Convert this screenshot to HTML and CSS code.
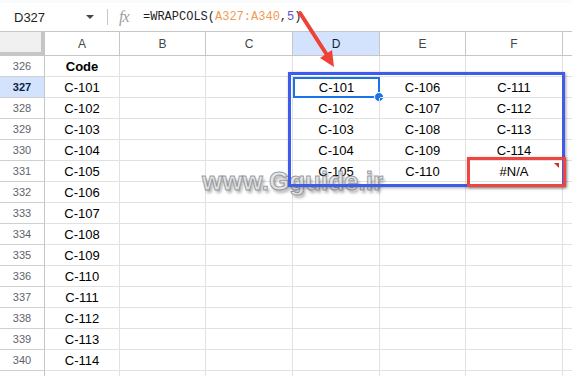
FILE: index.html
```html
<!DOCTYPE html>
<html lang="en">
<head>
    <meta charset="UTF-8">
    <title>WRAPCOLS - Sheets</title>
    <link rel="stylesheet" href="styles.css">
</head>
<body>
<div class="page">
    <div class="formula-bar">
        <div class="name-box">D327</div>
        <div class="name-arrow"></div>
        <div class="bar-sep"></div>
        <div class="fx">fx</div>
        <div class="formula">=WRAPCOLS(<span class="ref">A327:A340</span>,<span class="num">5</span>)</div>
    </div>

    <div class="sheet" id="sheet"></div>

    <!-- annotations over the grid -->
    <div class="watermark">www.Gguide.ir</div>
    <div class="mark-blue"></div>
    <div class="mark-red"></div>
    <svg class="arrow" width="572" height="376" viewBox="0 0 572 376">
        <line x1="300" y1="13" x2="327" y2="55" stroke="#ef4136" stroke-width="4" stroke-linecap="round"/>
        <polygon points="334,67 320,58 332,50" fill="#ef4136"/>
    </svg>
</div>

<script>
    var cols = ['A', 'B', 'C', 'D', 'E', 'F', 'G'];
    var sheet = document.getElementById('sheet');

    // wrapped output, 5 rows per column
    var codes = [];
    for (var i = 101; i <= 114; i++) codes.push('C-' + i);

    function cell(cls, text) {
        var d = document.createElement('div');
        d.className = cls;
        if (text) d.textContent = text;
        sheet.appendChild(d);
        return d;
    }

    cell('corner');
    cols.forEach(function(c) {
        // column G is mostly off screen, its letter isn't visible
        cell('col-head' + (c === 'D' ? ' active' : ''), c === 'G' ? '' : c);
    });

    for (var r = 326; r <= 341; r++) {
        cell('row-head' + (r === 327 ? ' active' : ''), r <= 340 ? String(r) : '');
        cols.forEach(function(c, ci) {
            var text = '';
            var cls = 'cell';
            if (c === 'A') {
                if (r === 326) { text = 'Code'; cls += ' bold'; }
                else if (r <= 340) text = codes[r - 327];
            }
            if (ci >= 3 && ci <= 5 && r >= 327 && r <= 331) {
                var idx = (ci - 3) * 5 + (r - 327);
                text = idx < codes.length ? codes[idx] : '#N/A';
                if (idx >= codes.length) cls += ' error';
            }
            if (c === 'D' && r === 327) cls += ' selected';
            var el = cell(cls, text);
            if (c === 'D' && r === 327) {
                var h = document.createElement('span');
                h.className = 'handle';
                el.appendChild(h);
            }
        });
    }
</script>
</body>
</html>
```

FILE: styles.css
```css
body {
    margin: 0;
    background-color: #fff;
    font-family: Arial, "Liberation Sans", sans-serif;
}

.page {
    position: relative;
    width: 572px;
    height: 376px;
    overflow: hidden;
}

.formula-bar {
    height: 28px;
    margin-top: 3px;
    display: flex;
    align-items: center;
    background-color: #fff;
    box-shadow: 0 -3px 0 #f9fbfd;
}

.name-box {
    width: 72px;
    padding-left: 14px;
    font-size: 13px;
    color: #1f1f1f;
}

.name-arrow {
    width: 0;
    height: 0;
    border-left: 4px solid transparent;
    border-right: 4px solid transparent;
    border-top: 4px solid #444746;
    margin-right: 13px;
}

.bar-sep {
    width: 1px;
    height: 16px;
    background-color: #c7c7c7;
    margin-right: 11px;
}

.fx {
    font-family: "Liberation Serif", serif;
    font-style: italic;
    font-size: 16px;
    color: #9aa0a6;
    width: 24px;
    letter-spacing: -1px;
}

.formula {
    font-family: "Liberation Mono", monospace;
    font-size: 12px;
    color: #1f1f1f;
}

.formula .ref {
    color: #f29b53;
}

.formula .num {
    color: #5f52c8;
}

.sheet {
    display: grid;
    grid-template-columns: 45px 75px 86px 87px 87px 86px 97px 40px;
    grid-template-rows: 24px repeat(16, 21px);
    border-top: 1px solid #c4c7c5;
}

.sheet > div {
    box-sizing: border-box;
    border-right: 1px solid #e1e1e1;
    border-bottom: 1px solid #e1e1e1;
    display: flex;
    align-items: center;
    justify-content: center;
    position: relative;
}

.sheet > .corner {
    background-color: #f0f0f0;
    border-right: 4px solid #c4c7c5;
    border-bottom: 4px solid #c4c7c5;
}

.sheet > .col-head {
    font-size: 12px;
    color: #444746;
    border-right-color: #c4c7c5;
    border-bottom-color: #c4c7c5;
}

.sheet > .row-head {
    font-size: 11px;
    color: #5f6368;
    border-right-color: #c4c7c5;
    border-bottom-color: #d0d0d0;
}

.sheet > .active {
    background-color: #d3e3fd;
    color: #0b1f44;
}

.sheet > .row-head.active {
    font-weight: bold;
}

.cell {
    font-size: 13px;
    color: #000;
}

.cell.bold {
    font-weight: bold;
}

.sheet > .selected {
    border: 2px solid #1a73e8;
}

.handle {
    position: absolute;
    right: -6px;
    bottom: -6px;
    width: 8px;
    height: 8px;
    border-radius: 50%;
    background-color: #1a73e8;
    border: 1px solid #fff;
}

.cell.error::after {
    content: "";
    position: absolute;
    top: 2px;
    right: 3px;
    border-left: 5px solid transparent;
    border-top: 5px solid #d93025;
}

.mark-blue {
    position: absolute;
    left: 288px;
    top: 72px;
    width: 277px;
    height: 115px;
    box-sizing: border-box;
    border: 3px solid #3f5be9;
    box-shadow: 1px 1px 3px rgba(0, 0, 0, 0.35);
}

.mark-red {
    position: absolute;
    left: 467px;
    top: 157px;
    width: 99px;
    height: 30px;
    box-sizing: border-box;
    border: 3px solid #ee4540;
    box-shadow: 1px 1px 3px rgba(0, 0, 0, 0.35);
}

.arrow {
    position: absolute;
    left: 0;
    top: 0;
}

.watermark {
    position: absolute;
    left: 202px;
    top: 166px;
    font-size: 26px;
    font-weight: bold;
    color: rgba(228, 229, 232, 0.85);
    -webkit-text-stroke: 1px rgba(130, 134, 142, 0.8);
    text-shadow: 2px 3px 3px rgba(0, 0, 0, 0.3);
}
```
